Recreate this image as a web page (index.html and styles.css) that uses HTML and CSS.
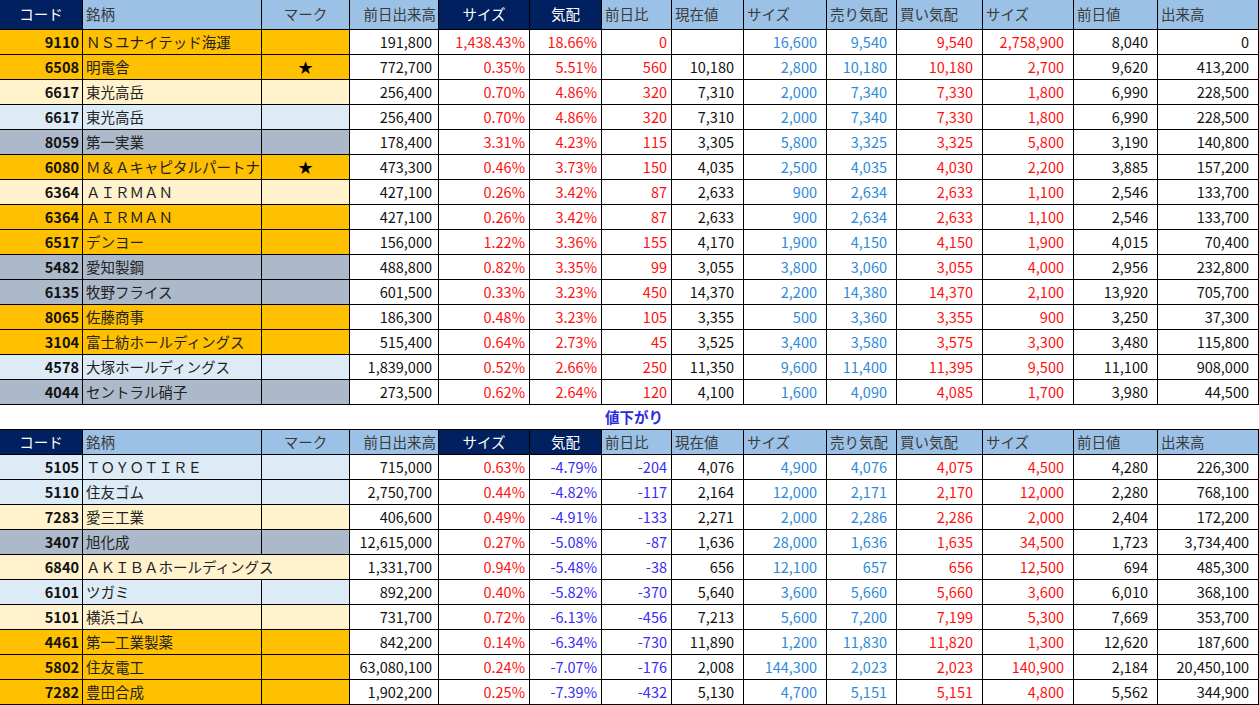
FILE: index.html
```html
<!DOCTYPE html>
<html lang="ja">
<head>
<meta charset="utf-8">
<title>値上がり・値下がり</title>
<link rel="stylesheet" href="styles.css">
</head>
<body>
<div class="sheet">
  <div class="grid t1">
    <div class="row hd">
      <div class="c nv">コード</div><div class="c lb">銘柄</div><div class="c lb ctr">マーク</div><div class="c lb rt">前日出来高</div><div class="c nv">サイズ</div><div class="c nv">気配</div><div class="c lb">前日比</div><div class="c lb">現在値</div><div class="c lb">サイズ</div><div class="c lb">売り気配</div><div class="c lb">買い気配</div><div class="c lb">サイズ</div><div class="c lb">前日値</div><div class="c lb">出来高</div>
    </div>
    <div class="row or">
      <div class="c f code">9110</div><div class="c f name">ＮＳユナイテッド海運</div><div class="c f mark"></div><div class="c num pm">191,800</div><div class="c num ps red">1,438.43%</div><div class="c num ps red">18.66%</div><div class="c num ps red">0</div><div class="c num"></div><div class="c num blu">16,600</div><div class="c num blu">9,540</div><div class="c num red">9,540</div><div class="c num red">2,758,900</div><div class="c num">8,040</div><div class="c num">0</div>
    </div>
    <div class="row or">
      <div class="c f code">6508</div><div class="c f name">明電舎</div><div class="c f mark">★</div><div class="c num pm">772,700</div><div class="c num ps red">0.35%</div><div class="c num ps red">5.51%</div><div class="c num ps red">560</div><div class="c num">10,180</div><div class="c num blu">2,800</div><div class="c num blu">10,180</div><div class="c num red">10,180</div><div class="c num red">2,700</div><div class="c num">9,620</div><div class="c num">413,200</div>
    </div>
    <div class="row cr">
      <div class="c f code">6617</div><div class="c f name">東光高岳</div><div class="c f mark"></div><div class="c num pm">256,400</div><div class="c num ps red">0.70%</div><div class="c num ps red">4.86%</div><div class="c num ps red">320</div><div class="c num">7,310</div><div class="c num blu">2,000</div><div class="c num blu">7,340</div><div class="c num red">7,330</div><div class="c num red">1,800</div><div class="c num">6,990</div><div class="c num">228,500</div>
    </div>
    <div class="row lbl">
      <div class="c f code">6617</div><div class="c f name">東光高岳</div><div class="c f mark"></div><div class="c num pm">256,400</div><div class="c num ps red">0.70%</div><div class="c num ps red">4.86%</div><div class="c num ps red">320</div><div class="c num">7,310</div><div class="c num blu">2,000</div><div class="c num blu">7,340</div><div class="c num red">7,330</div><div class="c num red">1,800</div><div class="c num">6,990</div><div class="c num">228,500</div>
    </div>
    <div class="row gr">
      <div class="c f code">8059</div><div class="c f name">第一実業</div><div class="c f mark"></div><div class="c num pm">178,400</div><div class="c num ps red">3.31%</div><div class="c num ps red">4.23%</div><div class="c num ps red">115</div><div class="c num">3,305</div><div class="c num blu">5,800</div><div class="c num blu">3,325</div><div class="c num red">3,325</div><div class="c num red">5,800</div><div class="c num">3,190</div><div class="c num">140,800</div>
    </div>
    <div class="row or">
      <div class="c f code">6080</div><div class="c f name">Ｍ＆Ａキャピタルパートナ</div><div class="c f mark">★</div><div class="c num pm">473,300</div><div class="c num ps red">0.46%</div><div class="c num ps red">3.73%</div><div class="c num ps red">150</div><div class="c num">4,035</div><div class="c num blu">2,500</div><div class="c num blu">4,035</div><div class="c num red">4,030</div><div class="c num red">2,200</div><div class="c num">3,885</div><div class="c num">157,200</div>
    </div>
    <div class="row cr">
      <div class="c f code">6364</div><div class="c f name">ＡＩＲＭＡＮ</div><div class="c f mark"></div><div class="c num pm">427,100</div><div class="c num ps red">0.26%</div><div class="c num ps red">3.42%</div><div class="c num ps red">87</div><div class="c num">2,633</div><div class="c num blu">900</div><div class="c num blu">2,634</div><div class="c num red">2,633</div><div class="c num red">1,100</div><div class="c num">2,546</div><div class="c num">133,700</div>
    </div>
    <div class="row or">
      <div class="c f code">6364</div><div class="c f name">ＡＩＲＭＡＮ</div><div class="c f mark"></div><div class="c num pm">427,100</div><div class="c num ps red">0.26%</div><div class="c num ps red">3.42%</div><div class="c num ps red">87</div><div class="c num">2,633</div><div class="c num blu">900</div><div class="c num blu">2,634</div><div class="c num red">2,633</div><div class="c num red">1,100</div><div class="c num">2,546</div><div class="c num">133,700</div>
    </div>
    <div class="row or">
      <div class="c f code">6517</div><div class="c f name">デンヨー</div><div class="c f mark"></div><div class="c num pm">156,000</div><div class="c num ps red">1.22%</div><div class="c num ps red">3.36%</div><div class="c num ps red">155</div><div class="c num">4,170</div><div class="c num blu">1,900</div><div class="c num blu">4,150</div><div class="c num red">4,150</div><div class="c num red">1,900</div><div class="c num">4,015</div><div class="c num">70,400</div>
    </div>
    <div class="row gr">
      <div class="c f code">5482</div><div class="c f name">愛知製鋼</div><div class="c f mark"></div><div class="c num pm">488,800</div><div class="c num ps red">0.82%</div><div class="c num ps red">3.35%</div><div class="c num ps red">99</div><div class="c num">3,055</div><div class="c num blu">3,800</div><div class="c num blu">3,060</div><div class="c num red">3,055</div><div class="c num red">4,000</div><div class="c num">2,956</div><div class="c num">232,800</div>
    </div>
    <div class="row gr">
      <div class="c f code">6135</div><div class="c f name">牧野フライス</div><div class="c f mark"></div><div class="c num pm">601,500</div><div class="c num ps red">0.33%</div><div class="c num ps red">3.23%</div><div class="c num ps red">450</div><div class="c num">14,370</div><div class="c num blu">2,200</div><div class="c num blu">14,380</div><div class="c num red">14,370</div><div class="c num red">2,100</div><div class="c num">13,920</div><div class="c num">705,700</div>
    </div>
    <div class="row or">
      <div class="c f code">8065</div><div class="c f name">佐藤商事</div><div class="c f mark"></div><div class="c num pm">186,300</div><div class="c num ps red">0.48%</div><div class="c num ps red">3.23%</div><div class="c num ps red">105</div><div class="c num">3,355</div><div class="c num blu">500</div><div class="c num blu">3,360</div><div class="c num red">3,355</div><div class="c num red">900</div><div class="c num">3,250</div><div class="c num">37,300</div>
    </div>
    <div class="row or">
      <div class="c f code">3104</div><div class="c f name">富士紡ホールディングス</div><div class="c f mark"></div><div class="c num pm">515,400</div><div class="c num ps red">0.64%</div><div class="c num ps red">2.73%</div><div class="c num ps red">45</div><div class="c num">3,525</div><div class="c num blu">3,400</div><div class="c num blu">3,580</div><div class="c num red">3,575</div><div class="c num red">3,300</div><div class="c num">3,480</div><div class="c num">115,800</div>
    </div>
    <div class="row lbl">
      <div class="c f code">4578</div><div class="c f name">大塚ホールディングス</div><div class="c f mark"></div><div class="c num pm">1,839,000</div><div class="c num ps red">0.52%</div><div class="c num ps red">2.66%</div><div class="c num ps red">250</div><div class="c num">11,350</div><div class="c num blu">9,600</div><div class="c num blu">11,400</div><div class="c num red">11,395</div><div class="c num red">9,500</div><div class="c num">11,100</div><div class="c num">908,000</div>
    </div>
    <div class="row gr">
      <div class="c f code">4044</div><div class="c f name">セントラル硝子</div><div class="c f mark"></div><div class="c num pm">273,500</div><div class="c num ps red">0.62%</div><div class="c num ps red">2.64%</div><div class="c num ps red">120</div><div class="c num">4,100</div><div class="c num blu">1,600</div><div class="c num blu">4,090</div><div class="c num red">4,085</div><div class="c num red">1,700</div><div class="c num">3,980</div><div class="c num">44,500</div>
    </div>
  </div>

  <div class="grid caption-row">
    <div class="caption">値下がり</div>
  </div>

  <div class="grid t2">
    <div class="row hd">
      <div class="c nv">コード</div><div class="c lb">銘柄</div><div class="c lb ctr">マーク</div><div class="c lb rt">前日出来高</div><div class="c nv">サイズ</div><div class="c nv">気配</div><div class="c lb">前日比</div><div class="c lb">現在値</div><div class="c lb">サイズ</div><div class="c lb">売り気配</div><div class="c lb">買い気配</div><div class="c lb">サイズ</div><div class="c lb">前日値</div><div class="c lb">出来高</div>
    </div>
    <div class="row lbl">
      <div class="c f code">5105</div><div class="c f name">ＴＯＹＯＴＩＲＥ</div><div class="c f mark"></div><div class="c num pm">715,000</div><div class="c num ps red">0.63%</div><div class="c num ps neg">-4.79%</div><div class="c num ps neg">-204</div><div class="c num">4,076</div><div class="c num blu">4,900</div><div class="c num blu">4,076</div><div class="c num red">4,075</div><div class="c num red">4,500</div><div class="c num">4,280</div><div class="c num">226,300</div>
    </div>
    <div class="row lbl">
      <div class="c f code">5110</div><div class="c f name">住友ゴム</div><div class="c f mark"></div><div class="c num pm">2,750,700</div><div class="c num ps red">0.44%</div><div class="c num ps neg">-4.82%</div><div class="c num ps neg">-117</div><div class="c num">2,164</div><div class="c num blu">12,000</div><div class="c num blu">2,171</div><div class="c num red">2,170</div><div class="c num red">12,000</div><div class="c num">2,280</div><div class="c num">768,100</div>
    </div>
    <div class="row cr">
      <div class="c f code">7283</div><div class="c f name">愛三工業</div><div class="c f mark"></div><div class="c num pm">406,600</div><div class="c num ps red">0.49%</div><div class="c num ps neg">-4.91%</div><div class="c num ps neg">-133</div><div class="c num">2,271</div><div class="c num blu">2,000</div><div class="c num blu">2,286</div><div class="c num red">2,286</div><div class="c num red">2,000</div><div class="c num">2,404</div><div class="c num">172,200</div>
    </div>
    <div class="row gr">
      <div class="c f code">3407</div><div class="c f name">旭化成</div><div class="c f mark"></div><div class="c num pm">12,615,000</div><div class="c num ps red">0.27%</div><div class="c num ps neg">-5.08%</div><div class="c num ps neg">-87</div><div class="c num">1,636</div><div class="c num blu">28,000</div><div class="c num blu">1,636</div><div class="c num red">1,635</div><div class="c num red">34,500</div><div class="c num">1,723</div><div class="c num">3,734,400</div>
    </div>
    <div class="row cr">
      <div class="c f code">6840</div><div class="c f name wide">ＡＫＩＢＡホールディングス</div><div class="c num pm">1,331,700</div><div class="c num ps red">0.94%</div><div class="c num ps neg">-5.48%</div><div class="c num ps neg">-38</div><div class="c num">656</div><div class="c num blu">12,100</div><div class="c num blu">657</div><div class="c num red">656</div><div class="c num red">12,500</div><div class="c num">694</div><div class="c num">485,300</div>
    </div>
    <div class="row lbl">
      <div class="c f code">6101</div><div class="c f name">ツガミ</div><div class="c f mark"></div><div class="c num pm">892,200</div><div class="c num ps red">0.40%</div><div class="c num ps neg">-5.82%</div><div class="c num ps neg">-370</div><div class="c num">5,640</div><div class="c num blu">3,600</div><div class="c num blu">5,660</div><div class="c num red">5,660</div><div class="c num red">3,600</div><div class="c num">6,010</div><div class="c num">368,100</div>
    </div>
    <div class="row cr">
      <div class="c f code">5101</div><div class="c f name">横浜ゴム</div><div class="c f mark"></div><div class="c num pm">731,700</div><div class="c num ps red">0.72%</div><div class="c num ps neg">-6.13%</div><div class="c num ps neg">-456</div><div class="c num">7,213</div><div class="c num blu">5,600</div><div class="c num blu">7,200</div><div class="c num red">7,199</div><div class="c num red">5,300</div><div class="c num">7,669</div><div class="c num">353,700</div>
    </div>
    <div class="row or">
      <div class="c f code">4461</div><div class="c f name">第一工業製薬</div><div class="c f mark"></div><div class="c num pm">842,200</div><div class="c num ps red">0.14%</div><div class="c num ps neg">-6.34%</div><div class="c num ps neg">-730</div><div class="c num">11,890</div><div class="c num blu">1,200</div><div class="c num blu">11,830</div><div class="c num red">11,820</div><div class="c num red">1,300</div><div class="c num">12,620</div><div class="c num">187,600</div>
    </div>
    <div class="row or">
      <div class="c f code">5802</div><div class="c f name">住友電工</div><div class="c f mark"></div><div class="c num pm">63,080,100</div><div class="c num ps red">0.24%</div><div class="c num ps neg">-7.07%</div><div class="c num ps neg">-176</div><div class="c num">2,008</div><div class="c num blu">144,300</div><div class="c num blu">2,023</div><div class="c num red">2,023</div><div class="c num red">140,900</div><div class="c num">2,184</div><div class="c num">20,450,100</div>
    </div>
    <div class="row or">
      <div class="c f code">7282</div><div class="c f name">豊田合成</div><div class="c f mark"></div><div class="c num pm">1,902,200</div><div class="c num ps red">0.25%</div><div class="c num ps neg">-7.39%</div><div class="c num ps neg">-432</div><div class="c num">5,130</div><div class="c num blu">4,700</div><div class="c num blu">5,151</div><div class="c num red">5,151</div><div class="c num red">4,800</div><div class="c num">5,562</div><div class="c num">344,900</div>
    </div>
  </div>
</div>
</body>
</html>
```

FILE: styles.css
```css
html, body {
  margin: 0;
  padding: 0;
  background: #ffffff;
}

body {
  font-family: "Noto Sans CJK JP", "Noto Sans", sans-serif;
  font-size: 14.5px;
  color: #111111;
  width: 1259px;
  height: 705px;
  overflow: hidden;
}

.sheet {
  display: flex;
  flex-direction: column;
}

.grid {
  display: grid;
  grid-template-columns: 83px 179px 88px 89px 91px 72px 70px 72px 83px 70px 86px 91px 84px 101px;
  grid-auto-rows: 25px;
}

.t1 {
  grid-template-rows: 30px;
}

.t2 {
  grid-template-rows: 26px;
}

.row {
  display: contents;
}

.c {
  box-sizing: border-box;
  border-right: 1px solid #000;
  border-bottom: 1px solid #000;
  display: flex;
  align-items: center;
  white-space: nowrap;
  overflow: hidden;
  min-width: 0;
  line-height: 1;
}

/* header */
.hd .c {
  color: #3a3a3a;
  padding-left: 3px;
}

.t2 .hd .c {
  border-top: 1px solid #000;
}

.hd .nv {
  background: #002060;
  color: #ffffff;
  justify-content: center;
  padding-left: 0;
}

.hd .lb {
  background: #9bc2e6;
}

.hd .ctr {
  justify-content: center;
  padding-left: 0;
}

.hd .rt {
  justify-content: flex-end;
  padding-left: 0;
  padding-right: 2px;
}

/* body cells */
.code {
  font-weight: bold;
  justify-content: flex-end;
  padding-right: 3px;
  color: #111;
}

.name {
  padding-left: 3px;
  color: #222;
}

.name.wide {
  grid-column: span 2;
}

.mark {
  justify-content: center;
  color: #000;
}

.num {
  justify-content: flex-end;
  padding-right: 9px;
}

.pm {
  padding-right: 6px;
}

.ps {
  padding-right: 4px;
}

.red {
  color: #ff1010;
}

.blu {
  color: #2f8ad8;
}

.neg {
  color: #3a2cf5;
}

/* row fills */
.or .f {
  background: #ffc000;
}

.cr .f {
  background: #fff2cc;
}

.lbl .f {
  background: #ddebf7;
}

.gr .f {
  background: #acb9ca;
}

/* caption between tables */
.caption-row {
  grid-template-rows: 24px;
}

.caption {
  grid-column: 7;
  justify-self: center;
  align-self: center;
  font-weight: bold;
  color: #2b2bdb;
  line-height: 1;
  margin-right: 6px;
}
```
